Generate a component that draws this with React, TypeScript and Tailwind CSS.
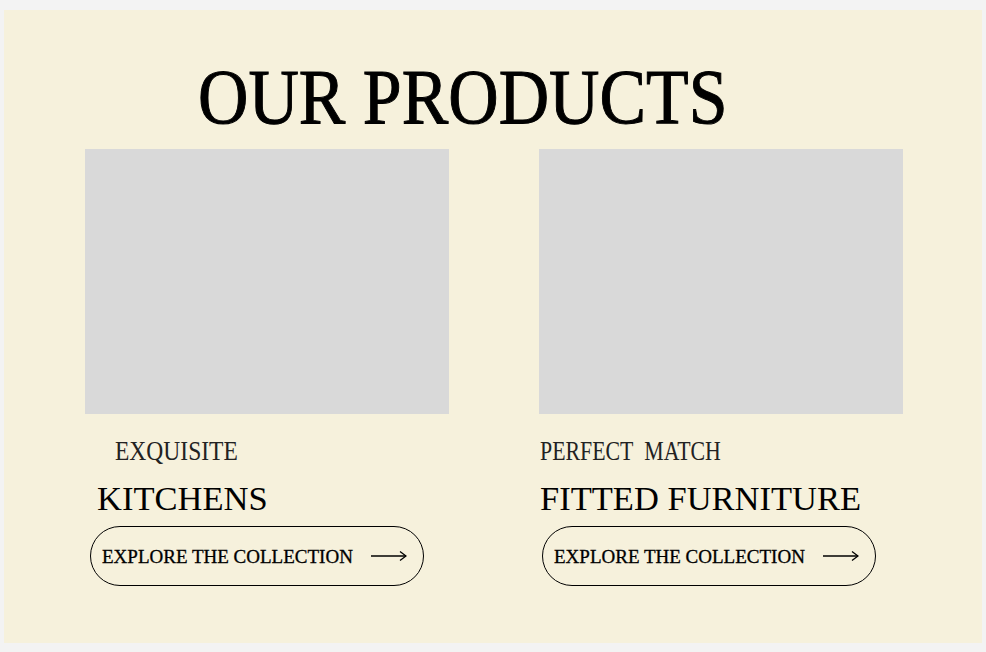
import React from 'react';

const serif = { fontFamily: '"Liberation Serif", "Times New Roman", serif' };

const Arrow = () => (
  <svg width="36" height="12" viewBox="0 0 36 12" fill="none" stroke="#000" strokeWidth="1.3">
    <path d="M0 6 H35" />
    <path d="M29 1.5 L35 6 L29 10.5" />
  </svg>
);

const products = [
  {
    label: 'EXQUISITE',
    title: 'KITCHENS',
    labelIndent: 'ml-[30px]',
    labelScale: 'scale-x-[0.84]',
    titleIndent: 'ml-[12px]',
    btnIndent: 'ml-[5px]',
  },
  {
    label: 'PERFECT\u00a0 MATCH',
    title: 'FITTED FURNITURE',
    labelIndent: 'ml-[1px]',
    labelScale: 'scale-x-[0.78]',
    titleIndent: 'ml-[1px]',
    btnIndent: 'ml-[3px]',
  },
];

const App = () => {
  return (
    <div className="min-h-[652px] bg-[#f3f3f3] pl-[4px] pt-[10px]" style={serif}>
      <section className="w-[978px] h-[633px] bg-[#f6f1dc] pt-[48px]">
        <h1 className="ml-[194px] h-[77px] text-[78px] leading-none text-black whitespace-nowrap [-webkit-text-stroke:1px_#000]">
          <span className="inline-block origin-left scale-x-[0.895]">OUR PRODUCTS</span>
        </h1>

        <div className="mt-[14px] pl-[81px] grid grid-cols-[364px_364px] gap-x-[90px]">
          {products.map((p, i) => (
            <div key={i} className="flex flex-col items-start">
              <div className="w-full h-[265px] bg-[#d9d9d9]" />
              <p className={`${p.labelIndent} mt-[23px] h-[28px] text-[28px] leading-none text-[#222] whitespace-nowrap`}>
                <span className={`inline-block origin-left ${p.labelScale}`}>{p.label}</span>
              </p>
              <h2 className={`${p.titleIndent} mt-[16px] h-[35px] text-[34.5px] leading-none text-black whitespace-nowrap`}>
                {p.title}
              </h2>
              <button
                className={`${p.btnIndent} mt-[10px] w-[334px] h-[60px] rounded-full border-[1.5px] border-black flex items-center pl-[11px] pr-[16px] justify-between`}
              >
                <span className="text-[19px] leading-none text-black whitespace-nowrap pt-[1px] [-webkit-text-stroke:0.3px_#000]">
                  EXPLORE THE COLLECTION
                </span>
                <Arrow />
              </button>
            </div>
          ))}
        </div>
      </section>
    </div>
  );
};

export default App;
